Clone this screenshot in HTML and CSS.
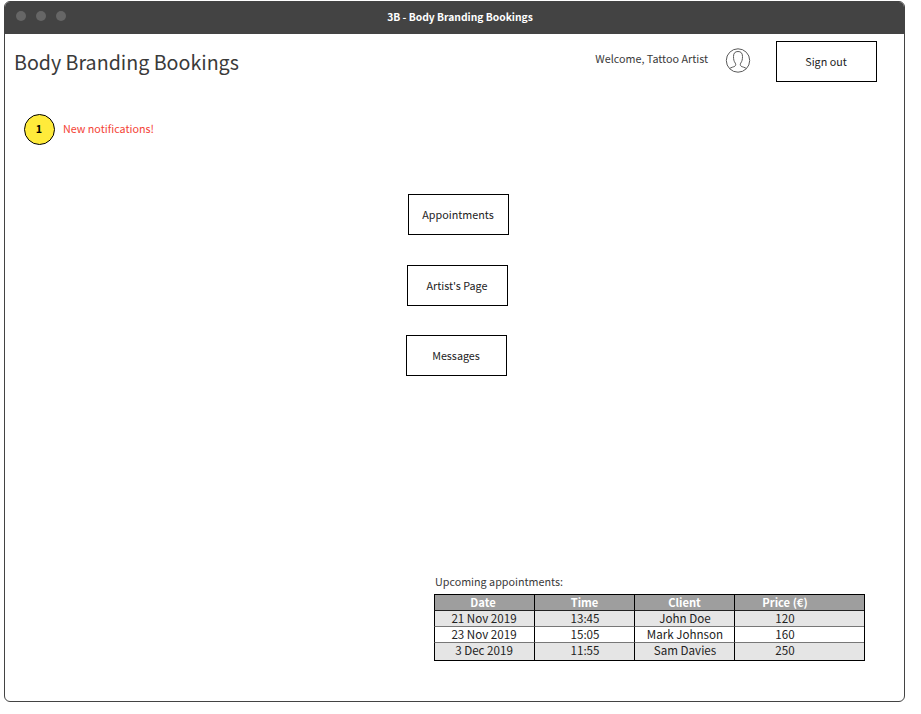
FILE: index.html
```html
<!DOCTYPE html>
<html lang="en">
<head>
<meta charset="utf-8">
<title>3B - Body Branding Bookings</title>
<link rel="stylesheet" href="styles.css">
</head>
<body>
<div class="window">
  <header class="titlebar">
    <div class="dots"><i></i><i></i><i></i></div>
    <span class="window-title">3B - Body Branding Bookings</span>
  </header>
  <div class="topbar">
    <h1>Body Branding Bookings</h1>
    <span class="welcome">Welcome, Tattoo Artist</span>
    <svg class="avatar" viewBox="0 -0.5 26 26" fill="none" stroke="#5a5a5a" stroke-width="1">
      <circle cx="13" cy="13" r="11.7"/>
      <path d="M4.600 21.100C6 19.800 8.700 19.500 9.900 18.700C11 18 10.900 16.600 10.200 15.500C9 13.800 8.500 12 8.500 9C8.500 5.500 10.200 4 13 4S17.500 5.500 17.500 9C17.500 12 17 13.800 15.800 15.500C15.100 16.600 15 18 16.100 18.700C17.300 19.500 20 19.800 21.400 21.100"/>
    </svg>
    <button class="btn signout">Sign out</button>
  </div>
  <div class="notice"><span class="badge">1</span><span class="notice-text">New notifications!</span></div>
  <nav class="menu">
    <button class="btn appointments">Appointments</button>
    <button class="btn artist">Artist's Page</button>
    <button class="btn messages">Messages</button>
  </nav>
  <section class="upcoming">
    <h2>Upcoming appointments:</h2>
    <table>
      <thead><tr><th>Date</th><th>Time</th><th>Client</th><th>Price (€)</th></tr></thead>
      <tbody>
        <tr><td>21 Nov 2019</td><td>13:45</td><td>John Doe</td><td>120</td></tr>
        <tr><td>23 Nov 2019</td><td>15:05</td><td>Mark Johnson</td><td>160</td></tr>
        <tr><td>3 Dec 2019</td><td>11:55</td><td>Sam Davies</td><td>250</td></tr>
      </tbody>
    </table>
  </section>
</div>
</body>
</html>
```
FILE: styles.css
```css
* { box-sizing: border-box; }
body {
  margin: 0;
  padding: 1px 0 0 4px;
  background: #fff;
  color: #3a3a3a;
  font: 12px/16px "Noto Sans CJK SC", "Noto Sans", sans-serif;
}
h1, h2 { margin: 0; font-weight: 400; }
.window {
  width: 901px;
  height: 701px;
  border: 1px solid #434343;
  border-radius: 6px;
  display: flex;
  flex-direction: column;
  overflow: hidden;
}
.titlebar {
  height: 32px;
  flex: none;
  background: #434343;
  display: grid;
  grid-template-columns: 1fr auto 1fr;
  align-items: center;
}
.dots { display: flex; gap: 10px; padding: 0 0 4px 10.5px; }
.dots i { width: 10px; height: 10px; border-radius: 50%; background: #666; }
.window-title { color: #fff; font-size: 10.3px; font-weight: 700; margin: 0 -5.500px 2px 5.500px; }
.topbar { display: flex; align-items: flex-start; height: 80px; padding: 7px 27px 0 9px; }
h1 { font-size: 19.650px; line-height: 28px; flex: 1; padding-top: 7px; white-space: nowrap; }
.welcome { margin: 10px 17px 0 0; font-size: 10.750px; }
.avatar { width: 26px; height: 26px; margin: 6px 25px 0 0; }
.btn {
  width: 101px;
  height: 41px;
  flex: none;
  padding: 0 1px 0 0;
  border: 1px solid #000;
  background: #fff;
  color: #222;
  font: 10.750px/16px "Noto Sans CJK SC", "Noto Sans", sans-serif;
}
.notice { display: flex; align-items: center; gap: 8px; padding-left: 19px; height: 31px; }
.badge {
  width: 31px;
  height: 31px;
  padding-right: 1px;
  border: 1px solid #000;
  border-radius: 50%;
  background: #ffeb3b;
  color: #000;
  font-weight: 700;
  font-size: 10.750px;
  line-height: 27px;
  text-align: center;
}
.notice-text { color: #f44336; font-size: 10.750px; padding-bottom: 1px; }
.menu { display: flex; flex-direction: column; padding-top: 49px; }
.appointments { margin-left: 403px; }
.artist { margin: 30px 0 29px 402px; }
.messages { margin-left: 401px; }
.upcoming { margin: 198px 0 0 429px; }
h2 { font-size: 10.750px; line-height: 16px; height: 20px; padding-left: 1px; }
table {
  width: 431px;
  table-layout: fixed;
  border-collapse: separate;
  border-spacing: 0;
  border: solid #000;
  border-width: 1px 1px 1px 0;
  font-size: 11.600px;
  line-height: 15px;
  text-align: center;
  color: #222;
}
th, td { width: 100px; height: 16px; padding: 0; border-left: 1px solid #000; border-bottom: 1px solid #777; }
td:first-child { padding-right: 1px; }
td:nth-child(2), td:nth-child(3) { padding-left: 1px; }
th:last-child, td:last-child { width: 130px; padding-right: 29px; }
th { background: #9e9e9e; color: #fff; font-size: 11.200px; line-height: 14px; padding-bottom: 1px; font-weight: 700; border-bottom-color: #222; }
th:first-child { padding-right: 3px; }
tbody tr:nth-child(odd) td { background: #e5e5e5; }
tbody tr:last-child td { border-bottom: 0; height: 17px; padding-bottom: 2px; }
```
